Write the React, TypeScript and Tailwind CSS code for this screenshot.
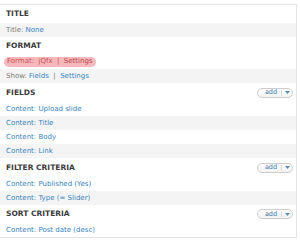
import React from 'react';

const font = { fontFamily: '"DejaVu Sans", Verdana, sans-serif' };

const AddButton = () => (
    <div className="flex items-center h-[10px] w-[36px] rounded-full border border-[#cdcdcd] bg-gradient-to-b from-white to-[#f2f2f2] text-[6.5px] text-[#3b78a8]">
        <span className="flex-1 text-center pl-[3px] leading-none">add</span>
        <span className="w-px h-[6px] bg-[#dadada]" />
        <span className="w-[10px] flex justify-center">
            <svg width="5" height="3" viewBox="0 0 5 3"><path d="M0 0h5L2.5 3z" fill="#5a8ab5" /></svg>
        </span>
    </div>
);

const Header = ({ title, h, add }: { title: string; h: string; add?: boolean }) => (
    <div className={`flex items-center justify-between pl-[6px] pr-[3px] ${h}`}>
        <span className="text-[7.5px] font-bold uppercase text-[#3a3a3a] leading-none">{title}</span>
        {add && <AddButton />}
    </div>
);

const Row = ({ children, odd }: { children: React.ReactNode; odd?: boolean }) => (
    <div className={`flex items-center h-[14px] pl-[6px] text-[7px] leading-none ${odd ? 'bg-[#f4f4f4]' : 'bg-white'}`}>
        {children}
    </div>
);

const Link = ({ children }: { children: React.ReactNode }) => (
    <span className="text-[#3584bd]">{children}</span>
);

export default function App() {
    return (
        <div className="w-[300px] h-[245px] bg-white pt-[4px]" style={font}>
            <div className="w-[297px] border-t border-r border-b border-[#e4e4e4]">
                <Header title="Title" h="h-[18px]" />
                <Row odd>
                    <span className="text-[#7a7a7a]">Title:&nbsp;</span><Link>None</Link>
                </Row>

                <Header title="Format" h="h-[17px]" />
                <div className="flex items-center h-[15px] pl-[4px]">
                    <div className="flex items-center h-[10px] px-[3px] rounded-full bg-[#f6b8bb] text-[7px] leading-none text-[#c95056]">
                        Format:&nbsp;&nbsp;jQfx&nbsp;&nbsp;|&nbsp;&nbsp;<span className="text-[#b9474e]">Settings</span>
                    </div>
                </div>
                <Row odd>
                    <span className="text-[#7a7a7a]">Show:&nbsp;</span><Link>Fields</Link>
                    <span className="text-[#7a7a7a]">&nbsp;&nbsp;|&nbsp;&nbsp;</span><Link>Settings</Link>
                </Row>

                <Header title="Fields" h="h-[19px]" add />
                <Row><Link>Content: Upload slide</Link></Row>
                <Row odd><Link>Content: Title</Link></Row>
                <Row><Link>Content: Body</Link></Row>
                <Row odd><Link>Content: Link</Link></Row>

                <Header title="Filter criteria" h="h-[19px]" add />
                <Row><Link>Content: Published (Yes)</Link></Row>
                <Row odd><Link>Content: Type (= Slider)</Link></Row>

                <Header title="Sort criteria" h="h-[18px]" add />
                <Row><Link>Content: Post date (desc)</Link></Row>
            </div>
        </div>
    );
}
